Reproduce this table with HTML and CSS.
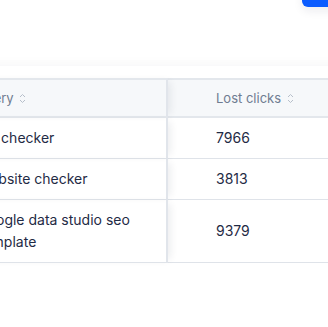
FILE: index.html
```html
<!DOCTYPE html>
<html lang="en">
<head>
    <meta charset="UTF-8">
    <meta name="viewport" content="width=device-width, initial-scale=1.0">
    <title>Lost clicks</title>
    <link rel="stylesheet" href="styles.css">
</head>
<body>
    <div class="topbar">
        <button class="btn-primary">Export</button>
    </div>

    <section class="card">
        <table class="kw-table">
            <thead>
                <tr>
                    <th class="col-query">Query
                        <svg class="sort" width="7" height="11" viewBox="0 0 7 11"><path d="M1 4 L3.5 1.5 L6 4 M1 7 L3.5 9.5 L6 7" /></svg>
                    </th>
                    <th class="col-clicks">Lost clicks
                        <svg class="sort" width="7" height="11" viewBox="0 0 7 11"><path d="M1 4 L3.5 1.5 L6 4 M1 7 L3.5 9.5 L6 7" /></svg>
                    </th>
                </tr>
            </thead>
            <tbody>
                <tr>
                    <td class="col-query">ssl checker</td>
                    <td class="col-clicks">7966</td>
                </tr>
                <tr>
                    <td class="col-query">website checker</td>
                    <td class="col-clicks">3813</td>
                </tr>
                <tr>
                    <td class="col-query">google data studio seo template</td>
                    <td class="col-clicks">9379</td>
                </tr>
            </tbody>
        </table>
    </section>
</body>
</html>
```

FILE: styles.css
```css
html {
    overflow: hidden;
    background: #ffffff;
}
body {
    margin: 0;
    font-family: Inter, "Noto Sans", sans-serif;
}
.topbar {
    display: flex;
    justify-content: flex-end;
    height: 7px;
}
.btn-primary {
    width: 46px;
    height: 36px;
    margin: -29px -20px 0 0;
    border: none;
    border-radius: 6px;
    background: #0b5cff;
    color: #ffffff;
    font-size: 13px;
    box-shadow: 0 4px 10px rgba(20, 30, 60, 0.08);
}
.card {
    width: 560px;
    margin: 59px 0 0 -45px;
    padding: 12px 0 14px 0;
    background: #ffffff;
    box-shadow: 0 -2px 12px rgba(20, 30, 60, 0.03), 0 18px 24px rgba(20, 30, 60, 0.13);
}
.kw-table {
    border-collapse: separate;
    border-spacing: 0;
    width: 520px;
    font-size: 14px;
    color: #1f2b45;
}
.kw-table th {
    height: 36px;
    padding: 0 24px;
    background: #f6f8fa;
    border-top: 2px solid #e3e7ec;
    border-bottom: 2px solid #e3e7ec;
    font-size: 13px;
    font-weight: 400;
    color: #6f7c91;
    text-align: left;
    white-space: nowrap;
}
.kw-table th.col-query {
    padding-left: 21px;
}
.kw-table td {
    padding: 9px 24px;
    line-height: 22px;
    border-bottom: 1px solid #dfe3e9;
    vertical-align: middle;
}
.kw-table .col-query {
    position: relative;
    width: 163px;
    border-right: 2px solid #e1e5eb;
    box-shadow: 6px 0 8px -4px rgba(20, 30, 60, 0.09);
}
.kw-table .col-clicks {
    padding-left: 48px;
}
.sort {
    margin-left: 2px;
    vertical-align: -1px;
    fill: none;
    stroke: #b7bfca;
    stroke-width: 1;
}
```
